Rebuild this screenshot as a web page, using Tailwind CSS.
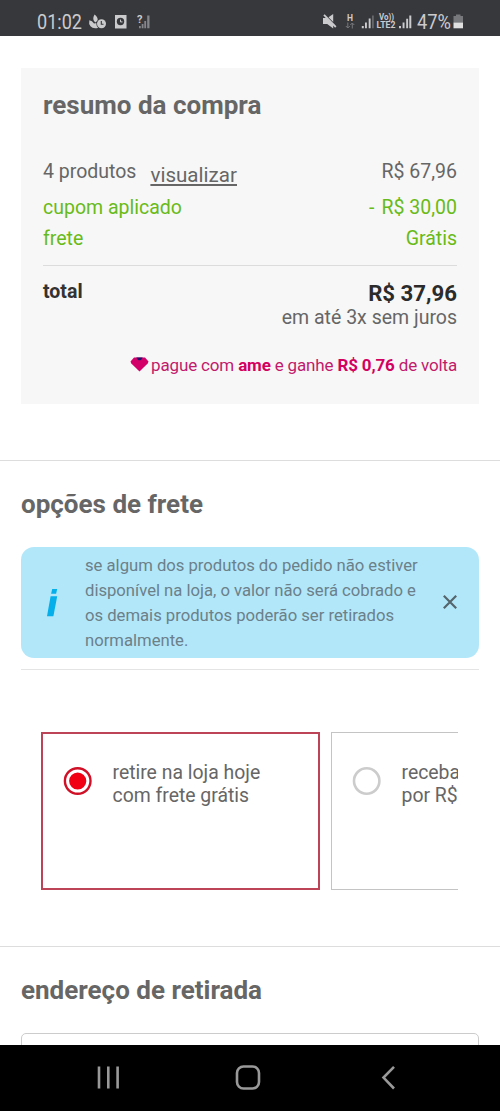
<!DOCTYPE html>
<html lang="pt-BR">
<head>
	<title>resumo da compra</title>
	<meta charset="UTF-8">
	<meta name="viewport" content="width=device-width, initial-scale=1.0">
	<script src="https://cdn.jsdelivr.net/npm/@tailwindcss/browser@4"></script>
</head>
<body class="bg-white font-['Roboto',sans-serif] text-[#666]">
	<div class="flex flex-col w-[500px] h-[1111px] overflow-hidden">
		<!-- status bar -->
		<header class="flex-none h-9 bg-[#37383c]">
			<svg class="block w-[500px] h-9" viewBox="0 0 500 36" fill="#cbcbcd">
				<text x="37" y="28.7" font-size="19.500" textLength="45" lengthAdjust="spacingAndGlyphs" class="font-['Roboto',sans-serif]">01:02</text>
				<path d="M94.500 14.500q3.500 2.500 3.200 6l-2.200 2q-4-2.500-1-8zM89.300 20.300q3 .2 4.700 3.200l3-.5l1.500 4.800q-5.500 1.500-8-1.500q-2-2.500-1.200-6z"/>
				<circle cx="101.500" cy="23.800" r="5.200" fill="#37383c"/>
				<circle cx="101.500" cy="23.800" r="4.500"/>
				<path d="M101.300 21v3.200h2.200" fill="none" stroke="#37383c" stroke-width="1.100"/>
				<rect x="115" y="15" width="11.500" height="13.500"/>
				<circle cx="120.500" cy="21.500" r="3.700" fill="#37383c"/>
				<path d="M120.500 19.600v2.300h2" fill="none" stroke="#cbcbcd" stroke-width="1"/>
				<text x="137" y="23" font-size="11" font-weight="700" class="font-['Roboto',sans-serif]">?</text>
				<path d="M139 26h1.800v2.300h-1.800zM141.700 24h1.800v4.300h-1.800zM144.300 21h1.800v7.300h-1.800zM147.200 15.500h2.300v12.800h-2.300z" fill="#85868a"/>
				<path d="M323 18h3.500l6.700 6.800v3.700l-6-4.500h-4.200zM328.500 17.300l4.700-3.300v8z"/>
				<path d="M324 14.800l11.800 12.200" stroke="#cbcbcd" stroke-width="1.800"/>
				<text x="347" y="20.500" font-size="8.500" font-weight="700" class="font-['Roboto',sans-serif]">H</text>
				<path d="M347.800 22.500v5.500m-2-2l2 2l2-2M352.300 28.500v-5.500m-2 2l2-2l2 2" fill="none" stroke="#77787c" stroke-width="1"/>
				<path d="M361.800 26h2v2.200h-2zM365 22.500h1.900v5.700h-1.900zM368.700 18.500h1.900v9.700h-1.900z"/>
				<path d="M372 15.500h1.800v12.700h-1.800z" fill="#66676b"/>
				<text x="379" y="20" font-size="8.500" font-weight="700" textLength="15" lengthAdjust="spacingAndGlyphs" class="font-['Roboto',sans-serif]">Vo))</text>
				<text x="376.500" y="28" font-size="8.800" font-weight="700" textLength="19" lengthAdjust="spacingAndGlyphs" class="font-['Roboto',sans-serif]">LTE2</text>
				<path d="M399 26h2v2.200h-2zM402.600 22.500h1.900v5.700h-1.900zM406.200 18.800h1.900v9.400h-1.900zM409.300 15.500h2v12.700h-2z"/>
				<text x="417" y="28.700" font-size="19.500" textLength="34" lengthAdjust="spacingAndGlyphs" class="font-['Roboto',sans-serif]">47%</text>
				<path d="M456 14.500h4.500v1.500h2.500v6.500h-9.500v-6.500h2.500z" fill="#77787c"/>
				<path d="M453.500 22.500h9.500v5.800h-9.500z" fill="#e0e0e1"/>
			</svg>
		</header>

		<main class="flex-none h-[1009px] overflow-hidden">
			<section class="h-[425px] pt-8 px-[21px] border-b border-[#ddd]">
				<div class="h-[336px] px-[22px] pt-[22px] bg-[#f7f7f7]">
					<h2 class="h-[66px] text-[26px] leading-[30px] font-bold">resumo da compra</h2>
					<div class="flex justify-between h-9 text-[19.500px] leading-[32px]">
						<div class="flex gap-[14px]"><span>4 produtos</span><a class="pt-[3px] text-[20.600px] underline decoration-[1.500px] underline-offset-[2px]">visualizar</a></div>
						<span>R$ 67,96</span>
					</div>
					<div class="flex justify-between h-[31px] text-[19.500px] leading-[32px] text-[#68bb18]"><span>cupom aplicado</span><span class="flex gap-[7px]"><span>-</span><span>R$ 30,00</span></span></div>
					<div class="flex justify-between h-[43px] text-[19.500px] leading-[32px] text-[#68bb18] border-b border-[#dcdcdc]"><span>frete</span><span>Grátis</span></div>
					<div class="flex justify-between pt-[13px] h-[83px]">
						<span class="pt-px text-[19.500px] leading-6 font-bold text-[#333]">total</span>
						<div class="text-right">
							<p class="text-[22.200px] leading-7 font-bold text-[#2b2b2b]">R$ 37,96</p>
							<p class="pt-px text-[19.500px] leading-5">em até 3x sem juros</p>
						</div>
					</div>
					<p class="flex justify-end items-center gap-[2px] text-[17px] leading-8 tracking-[-0.160px] text-[#c21a6b]">
						<svg class="w-[19px] h-[15px] mt-[-2px]" viewBox="0 0 19 15"><path d="M4 .5h11l3.500 3.900-.8 2L9.500 14.500 1.300 6.400l-.8-2z" fill="#d3006a"/><path d="M6.300.5h6.400L11.200 2.700q-1.700 1.300-3.400 0z" fill="#22116b"/></svg>
						<span>pague com <b class="text-[#d3005f]">ame</b> e ganhe <b class="text-[#d3005f]">R$ 0,76</b> de volta</span>
					</p>
				</div>
			</section>

			<section class="h-[486px] px-[21px] pt-[28px] border-b border-[#ddd]">
				<h2 class="h-[58px] text-[26px] leading-[30px] font-bold">opções de frete</h2>
				<div class="flex items-center h-[111px] rounded-[13px] bg-[#b2e7fa] text-[#6c8089]">
					<svg class="w-16 h-[30px]" viewBox="0 0 64 30" fill="#06aeea"><path d="M31.200 1h5l-1.100 4.800h-5zM29.600 8.200h6.600l-3.800 20h-6.400z"/></svg>
					<p class="w-[340px] text-[16.700px] leading-[25px] tracking-[-0.020px] whitespace-nowrap">se algum dos produtos do pedido não estiver<br>disponível na loja, o valor não será cobrado e<br>os demais produtos poderão ser retirados<br>normalmente.</p>
					<svg class="ml-[17px] mt-[-1px] w-4 h-4" viewBox="0 0 16 16"><path d="M1.800 1.800l12.400 12.400M14.200 1.800L1.800 14.200" stroke="#55656c" stroke-width="2.200"/></svg>
				</div>
				<div class="h-3 border-b border-[#e4e4e4]"></div>
				<div class="flex gap-[11px] mt-[62px] ml-[20px] mr-[21px] h-[158px] overflow-hidden text-[19.400px] leading-[22.500px]">
					<div class="flex flex-none w-[279px] border-2 border-[#bd4457] pt-[28px] pl-5">
						<svg class="w-[30px] h-[30px] mt-[4px] mr-[19.500px]" viewBox="0 0 30 30"><circle cx="14.700" cy="15" r="12.800" fill="#fff" stroke="#cf1026" stroke-width="2.400"/><circle cx="14.700" cy="15" r="8.600" fill="#f00012"/></svg>
						<p>retire na loja hoje<br>com frete grátis</p>
					</div>
					<div class="flex flex-none w-[279px] border border-[#c4c4c4] pt-[29px] pl-5">
						<svg class="w-[30px] h-[30px] mt-[4px] mr-[19.500px]" viewBox="0 0 30 30"><circle cx="14.700" cy="15" r="12.700" fill="#fff" stroke="#ccc" stroke-width="2.600"/></svg>
						<p>receba<br>por R$</p>
					</div>
				</div>
			</section>

			<section class="px-[21px] pt-[28px]">
				<h2 class="h-[58px] text-[26px] leading-[30px] font-bold">endereço de retirada</h2>
				<div class="h-12 rounded-[5px] border-[1.500px] border-[#ccc]"></div>
			</section>
		</main>

		<!-- navigation bar -->
		<nav class="flex-none h-[66px] bg-black">
			<svg class="block w-[500px] h-[66px]" viewBox="0 0 500 66" fill="none" stroke="#999" stroke-width="2.600">
				<path d="M99 21.500v22M108.300 21.500v22M117.600 21.500v22"/>
				<rect x="237" y="21.500" width="22" height="22" rx="6.500"/>
				<path d="M394 21.800L383.500 32.600L394 43.500"/>
			</svg>
		</nav>
	</div>
</body>
</html>
